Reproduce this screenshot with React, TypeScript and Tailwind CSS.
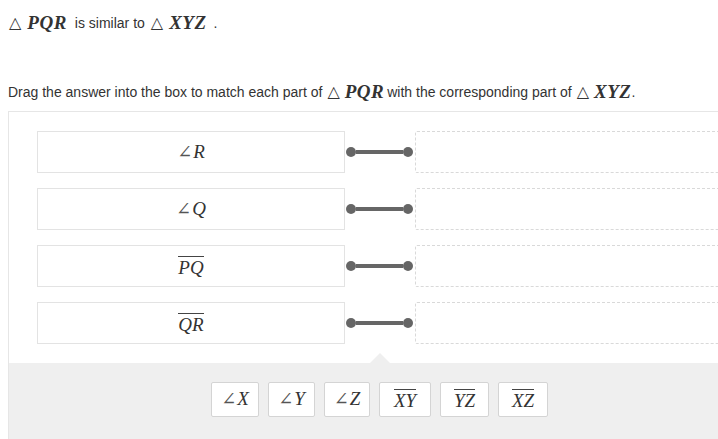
import React from 'react'

const rows = [
  { label: 'R', bar: false },
  { label: 'Q', bar: false },
  { label: 'PQ', bar: true },
  { label: 'QR', bar: true },
]

const tiles = [
  { label: 'X', bar: false, w: 'w-[48px]' },
  { label: 'Y', bar: false, w: 'w-[47px]' },
  { label: 'Z', bar: false, w: 'w-[46px]' },
  { label: 'XY', bar: true, w: 'w-[52px]' },
  { label: 'YZ', bar: true, w: 'w-[49px]' },
  { label: 'XZ', bar: true, w: 'w-[50px]' },
]

function Tri() {
  return <span className="font-['DejaVu_Sans',sans-serif] not-italic text-[16px] font-normal">△</span>
}

function MathName({ children }: { children: React.ReactNode }) {
  return (
    <span className="font-['Liberation_Serif',serif] italic font-bold text-[19px] tracking-[0.5px]">
      {children}
    </span>
  )
}

function Part({ label, bar }: { label: string; bar: boolean }) {
  if (bar) {
    return (
      <span className="inline-block border-t border-[#444] pt-[1px] leading-[19px] font-['Liberation_Serif',serif] italic text-[19px] text-[#333]">
        {label}
      </span>
    )
  }
  return (
    <span className="font-['Liberation_Serif',serif] italic text-[19px] text-[#333]">
      <span className="not-italic font-['DejaVu_Serif',serif] text-[18px] text-[#555] mr-[1px]">∠</span>
      {label}
    </span>
  )
}

export default function App() {
  return (
    <div className="w-[718px] h-[439px] overflow-hidden bg-white text-[#333] font-['Liberation_Sans',Arial,sans-serif]">
      {/* Statement */}
      <div className="pl-[9px] pt-[16px] h-[30px] flex items-center gap-[6px] text-[14px]">
        <Tri />
        <MathName>PQR</MathName>
        <span className="ml-[2px]">is similar to</span>
        <Tri />
        <MathName>XYZ</MathName>
        <span className="ml-[1px]">.</span>
      </div>

      {/* Instruction */}
      <div className="pl-[8px] mt-[50px] h-[24px] flex items-center text-[14px] whitespace-nowrap">
        <span>Drag the answer into the box to match each part of</span>
        <span className="ml-[5px]"><Tri /></span>
        <span className="ml-[5px]"><MathName>PQR</MathName></span>
        <span className="ml-[3px]">with the corresponding part of</span>
        <span className="ml-[5px]"><Tri /></span>
        <span className="ml-[5px]"><MathName>XYZ</MathName></span>
        <span>.</span>
      </div>

      {/* Matching panel */}
      <div className="ml-[8px] mt-[7px] w-[740px] border-l border-t border-[#e6e6e6]">
        <div className="pt-[19px] pl-[28px] flex flex-col gap-[15px]">
          {rows.map((r, i) => (
            <div key={i} className="flex items-stretch h-[42px]">
              <div className="w-[308px] border border-[#e3e3e3] flex items-center justify-center">
                <Part label={r.label} bar={r.bar} />
              </div>
              <div className="w-[70px] flex items-center pl-[1px] pr-[2px]">
                <div className="w-[10px] h-[10px] rounded-full bg-[#666]" />
                <div className="flex-1 h-[4px] bg-[#666]" />
                <div className="w-[10px] h-[10px] rounded-full bg-[#666]" />
              </div>
              <div className="flex-1 border border-dashed border-[#d9d9d9] rounded-[2px]" />
            </div>
          ))}
        </div>

        {/* Answer tray */}
        <div className="relative mt-[19px] h-[90px] bg-[#efefef] pt-[19px] pl-[202px]">
          <div className="absolute -top-[10px] left-[361px] w-0 h-0 border-l-[10px] border-r-[10px] border-b-[10px] border-l-transparent border-r-transparent border-b-[#efefef]" />
          <div className="flex gap-[9px]">
            {tiles.map((t, i) => (
              <div
                key={i}
                className={`${t.w} h-[35px] bg-white border border-[#d4d4d4] rounded-[2px] flex items-center justify-center`}
              >
                <Part label={t.label} bar={t.bar} />
              </div>
            ))}
          </div>
        </div>
      </div>
    </div>
  )
}
